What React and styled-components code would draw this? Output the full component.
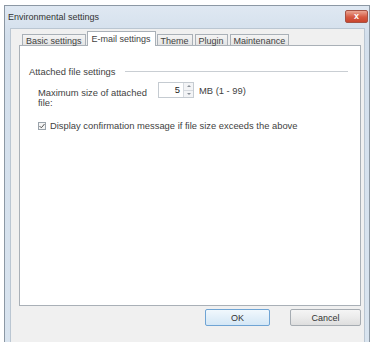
import styled, { createGlobalStyle } from "styled-components";

const GlobalStyle = createGlobalStyle`
  html, body {
    margin: 0;
    padding: 0;
    background: #ffffff;
    font-family: "Liberation Sans", Arial, sans-serif;
    font-size: 9.4px;
    color: #424242;
  }
`;

const Window = styled.div`
  margin: 5px 0 0 4px;
  width: 366px;
  height: 345px;
  box-sizing: border-box;
  border: 1px solid #8c98a4;
  border-bottom: none;
  background: linear-gradient(#dfe8f2, #d3dfec 30px, #d9e4ef);
  display: flex;
  flex-direction: column;
`;

const TitleBar = styled.div`
  height: 22px;
  display: flex;
  align-items: flex-start;
  justify-content: space-between;
  padding: 0 1px 0 3px;
`;

const Title = styled.span`
  margin-top: 6px;
  font-size: 9px;
  color: #333;
`;

const CloseButton = styled.div`
  width: 23px;
  height: 13px;
  margin-top: 4px;
  box-sizing: border-box;
  border-radius: 2px;
  background: linear-gradient(#eba593, #d65a42 55%, #c9452e);
  border: 1px solid #a55244;
  display: flex;
  align-items: center;
  justify-content: center;
  color: #fff;
  font-size: 9px;
  font-weight: bold;
  line-height: 1;
`;

const Client = styled.div`
  flex: 1;
  margin: 0 4px 0 5px;
  background: #f0f0f0;
  border: 1px solid #bac6d2;
  border-bottom: none;
  display: flex;
  flex-direction: column;
  padding: 2px 3px 0 8px;
`;

const TabStrip = styled.div`
  display: flex;
  align-items: flex-end;
  gap: 2px;
  padding-left: 3px;
  height: 15px;
  position: relative;
  z-index: 1;
`;

const Tab = styled.div`
  height: ${(p) => (p.$active ? "15px" : "12px")};
  box-sizing: border-box;
  padding: ${(p) => (p.$active ? "2px 4px 0" : "1px 3px 0")};
  margin: ${(p) => (p.$active ? "0 -1px" : "0")};
  border: 1px solid #a9b0b7;
  border-bottom: ${(p) => (p.$active ? "none" : "1px solid #a9b0b7")};
  background: ${(p) =>
    p.$active ? "#ffffff" : "linear-gradient(#f4f4f4, #e4e4e4)"};
  position: relative;
  z-index: ${(p) => (p.$active ? 2 : 1)};
  white-space: nowrap;
  font-size: 9px;
  line-height: 10px;
`;

const Panel = styled.div`
  height: 261px;
  margin-top: -1px;
  background: #ffffff;
  border: 1px solid #a9b0b7;
  padding: 20px 12px 0 9px;
  box-sizing: border-box;
`;

const GroupHeader = styled.div`
  display: flex;
  align-items: center;
  gap: 9px;
  line-height: 11px;
  &::after {
    content: "";
    flex: 1;
    height: 1px;
    background: #c9ced3;
  }
`;

const FieldRow = styled.div`
  display: flex;
  align-items: flex-start;
  margin: 5px 0 0 9px;
`;

const FieldLabel = styled.div`
  width: 120px;
  line-height: 10px;
  margin-top: 6px;
`;

const SpinBox = styled.div`
  width: 36px;
  height: 16px;
  box-sizing: border-box;
  border: 1px solid #c5cbd1;
  display: flex;
  align-items: stretch;
  background: #fff;
`;

const SpinValue = styled.div`
  flex: 1;
  text-align: right;
  padding-right: 3px;
  line-height: 14px;
  color: #222;
`;

const SpinArrows = styled.div`
  width: 9px;
  display: flex;
  flex-direction: column;
  border-left: 1px solid #d6dadf;
`;

const Arrow = styled.div`
  flex: 1;
  display: flex;
  align-items: center;
  justify-content: center;
  background: #f3f4f6;
  & + & {
    border-top: 1px solid #d6dadf;
  }
  &::before {
    content: "";
    border-left: 2px solid transparent;
    border-right: 2px solid transparent;
    ${(p) =>
      p.$up
        ? "border-bottom: 2px solid #8a9098;"
        : "border-top: 2px solid #8a9098;"}
  }
`;

const Unit = styled.span`
  margin: 3px 0 0 5px;
  line-height: 11px;
`;

const CheckRow = styled.label`
  display: flex;
  align-items: center;
  gap: 4px;
  margin: 12px 0 0 9px;
`;

const CheckBox = styled.span`
  width: 8px;
  height: 8px;
  box-sizing: border-box;
  border: 1px solid #9aa3ab;
  background: #f4f4f4;
  display: flex;
  align-items: center;
  justify-content: center;
`;

const ButtonRow = styled.div`
  display: flex;
  justify-content: flex-end;
  gap: 20px;
  padding: 3px 0 0;
`;

const Button = styled.div`
  width: ${(p) => (p.$wide ? "71px" : "65px")};
  height: 17px;
  box-sizing: border-box;
  border: 1px solid ${(p) => (p.$default ? "#6fa4d4" : "#a6acb2")};
  border-radius: 2px;
  background: ${(p) =>
    p.$default
      ? "linear-gradient(#f1f8fd, #e2eff9 50%, #d4e7f6)"
      : "linear-gradient(#f5f5f5, #ebebeb 50%, #dedede)"};
  display: flex;
  align-items: center;
  justify-content: center;
  color: #333;
  font-size: 9px;
`;

const tabs = ["Basic settings", "E-mail settings", "Theme", "Plugin", "Maintenance"];

export default function App() {
  return (
    <>
      <GlobalStyle />
      <Window>
        <TitleBar>
          <Title>Environmental settings</Title>
          <CloseButton>x</CloseButton>
        </TitleBar>
        <Client>
          <TabStrip>
            {tabs.map((t, i) => (
              <Tab key={t} $active={i === 1}>
                {t}
              </Tab>
            ))}
          </TabStrip>
          <Panel>
            <GroupHeader>Attached file settings</GroupHeader>
            <FieldRow>
              <FieldLabel>
                Maximum size of attached
                <br />
                file:
              </FieldLabel>
              <SpinBox>
                <SpinValue>5</SpinValue>
                <SpinArrows>
                  <Arrow $up />
                  <Arrow />
                </SpinArrows>
              </SpinBox>
              <Unit>MB (1 - 99)</Unit>
            </FieldRow>
            <CheckRow>
              <CheckBox>
                <svg width="6" height="6" viewBox="0 0 6 6">
                  <path d="M0.5 3 L2.3 4.8 L5.5 1" fill="none" stroke="#555" strokeWidth="1" />
                </svg>
              </CheckBox>
              Display confirmation message if file size exceeds the above
            </CheckRow>
          </Panel>
          <ButtonRow>
            <Button $default>OK</Button>
            <Button $wide>Cancel</Button>
          </ButtonRow>
        </Client>
      </Window>
    </>
  );
}
